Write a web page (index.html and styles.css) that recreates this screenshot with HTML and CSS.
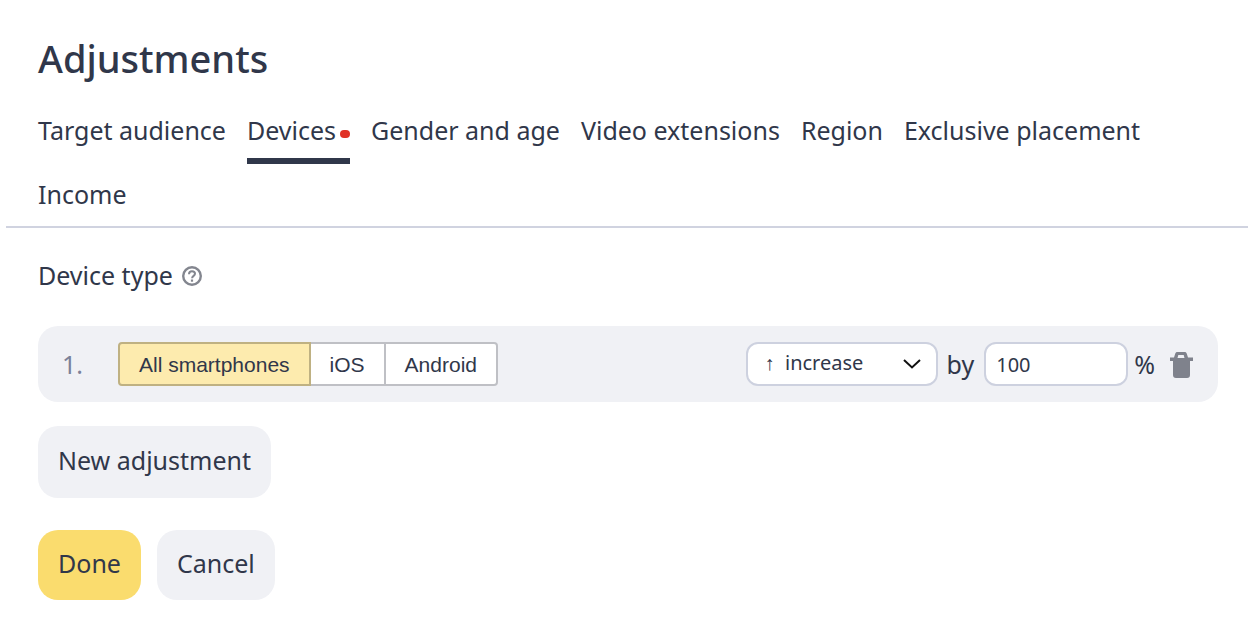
FILE: index.html
```
<!DOCTYPE html>
<html lang="en">

<head>
    <meta charset="UTF-8">
    <meta name="viewport" content="width=device-width, initial-scale=1.0">
    <title>Adjustments</title>
    <link rel="stylesheet" href="styles.css">
</head>

<body>
    <main class="adjustments">
        <h1>Adjustments</h1>

        <nav class="tabs">
            <a href="#audience" class="tab">Target audience</a>
            <a href="#devices" class="tab active">Devices<span class="dot"></span></a>
            <a href="#gender" class="tab">Gender and age</a>
            <a href="#video" class="tab">Video extensions</a>
            <a href="#region" class="tab">Region</a>
            <a href="#placement" class="tab">Exclusive placement</a>
            <a href="#income" class="tab">Income</a>
        </nav>

        <form class="content" id="devices">
            <div class="section-title">
                <h2>Device type</h2>
                <button type="button" class="help" aria-label="Help">
                    <svg width="20" height="20" viewBox="0 0 20 20" fill="none" stroke="#83868f" stroke-width="2">
                        <circle cx="10" cy="10" r="8.8" stroke-width="2.4" />
                        <path d="M7 8.2C7 6.2 8.2 5.2 10 5.2s3 1 3 2.600c0 2.200-2.900 2-2.900 4.400" />
                        <path d="M10 13.500v2.200" stroke-width="2.2" />
                    </svg>
                </button>
            </div>

            <div class="adjustment-row">
                <span class="number">1.</span>
                <div class="radio-group" role="radiogroup" aria-label="Device">
                    <input type="radio" name="device" id="all" checked>
                    <label for="all">All smartphones</label>
                    <input type="radio" name="device" id="ios">
                    <label for="ios">iOS</label>
                    <input type="radio" name="device" id="android">
                    <label for="android">Android</label>
                </div>
                <div class="amount">
                    <div class="select-wrap">
                        <select aria-label="Direction">
                            <option>↑&nbsp; increase</option>
                            <option>↓&nbsp; decrease</option>
                        </select>
                        <svg class="chevron" width="18" height="10" viewBox="0 0 18 10" fill="none" stroke="#111" stroke-width="2">
                            <path d="M1 1l8 7.5L17 1" />
                        </svg>
                    </div>
                    <label for="percent" class="by">by</label>
                    <input type="text" id="percent" class="percent" value="100">
                    <span class="unit">%</span>
                    <button type="button" class="delete" aria-label="Delete">
                        <svg width="24" height="28" viewBox="0 0 24 28">
                            <path fill="#7f828c" fill-rule="evenodd" d="M0 7.500h4l1.200-3.700C5.600 2.600 6.200 2 7.400 2h7.200c1.200 0 1.800.6 2.200 1.800L18 7.500h5V11h-3v14c0 2-1 3-3 3H6c-2 0-3-1-3-3V11H0zM7.500 8h7l-.8-3H8.300z" />
                        </svg>
                    </button>
                </div>
            </div>

            <button type="button" class="btn btn-new">New adjustment</button>

            <div class="actions">
                <button type="submit" class="btn btn-done">Done</button>
                <button type="button" class="btn">Cancel</button>
            </div>
        </form>
    </main>
</body>

</html>
```
FILE: styles.css
```
* {
    box-sizing: border-box;
}

body {
    margin: 0;
    background: #fff;
    color: #30374a;
    font-family: "Noto Sans", sans-serif;
    font-size: 25px;
    line-height: 32px;
}

.adjustments {
    padding: 32px 0 40px 6px;
}

h1 {
    margin: 0 32px 16px;
    font-size: 38px;
    font-weight: 500;
    line-height: 52px;
}

/* Tabs */
.tabs {
    display: flex;
    flex-wrap: wrap;
    column-gap: 21px;
    padding: 0 32px;
    box-shadow: inset 0 -2px #d0d3e0;
}

.tab {
    padding: 14px 0 12px;
    border-bottom: 6px solid transparent;
    color: inherit;
    text-decoration: none;
}

.tab.active {
    display: flex;
    align-items: center;
    gap: 4px;
    border-bottom-color: #30374a;
}

.dot {
    width: 10px;
    height: 8px;
    margin-top: 8px;
    border-radius: 4px;
    background: #e03226;
}

/* Device type */
.content {
    padding: 32px 30px 0 32px;
}

.section-title {
    display: flex;
    align-items: center;
    gap: 9px;
    margin-bottom: 34px;
}

h2 {
    margin: 0;
    padding-bottom: 2px;
    font-size: 25px;
    font-weight: 400;
    line-height: 30px;
}

.help,
.delete {
    display: flex;
    padding: 0;
    border: none;
    background: none;
    cursor: pointer;
}

.adjustment-row {
    display: flex;
    align-items: center;
    padding: 16px 24px;
    border-radius: 20px;
    background: #f0f1f5;
}

.number {
    width: 56px;
    color: #7b8199;
}

.radio-group {
    display: flex;
    font-family: "Liberation Sans", Arial, sans-serif;
    font-size: 21px;
}

.radio-group input {
    position: absolute;
    opacity: 0;
}

.radio-group label {
    height: 44px;
    padding: 0 19px;
    border: 2px solid #bfc0c5;
    border-left-width: 0;
    background: #fff;
    line-height: 42px;
    cursor: pointer;
}

.radio-group label:first-of-type {
    border-left-width: 2px;
    border-radius: 4px 0 0 4px;
}

.radio-group label:last-of-type {
    border-radius: 0 4px 4px 0;
}

.radio-group input:checked + label {
    border-color: #bfb182;
    background: #fdebae;
}

.amount {
    display: flex;
    align-items: center;
    margin-left: auto;
}

.select-wrap {
    position: relative;
}

select,
.percent {
    display: block;
    height: 44px;
    border: 2px solid #cdd1df;
    border-radius: 12px;
    background: #fff;
    color: inherit;
    font-family: inherit;
    font-size: 20px;
}

select {
    width: 192px;
    padding: 0 40px 3px 17px;
    appearance: none;
}

.chevron {
    position: absolute;
    top: 17px;
    right: 17px;
    pointer-events: none;
}

.by {
    margin: 0 10px 0 9px;
}

.percent {
    width: 144px;
    padding: 0 10px;
}

.unit {
    margin: 0 15px 0 6px;
}

/* Buttons */
.btn {
    height: 70px;
    padding: 0 20px 4px;
    border: none;
    border-radius: 20px;
    background: #f0f1f5;
    color: inherit;
    font-family: inherit;
    font-size: 25px;
    cursor: pointer;
}

.btn-new {
    height: 72px;
    margin: 24px 0 32px;
}

.btn-done {
    background: #fadc6e;
}

.actions {
    display: flex;
    gap: 16px;
}
```
